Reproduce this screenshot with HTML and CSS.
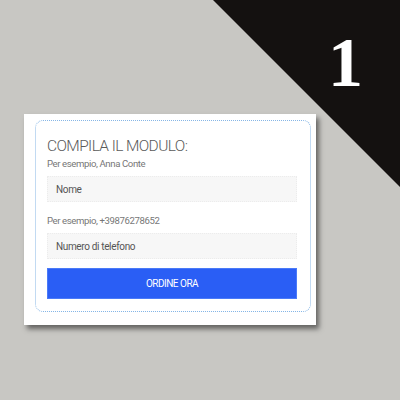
FILE: index.html
```
<!DOCTYPE html>
<html lang="it">
<head>
<meta charset="utf-8">
<link rel="stylesheet" href="styles.css">
</head>
<body>
<div class="corner"><span class="num">1</span></div>
<div class="card">
  <form class="form">
    <h1 class="title">COMPILA IL MODULO:</h1>
    <label class="hint">Per esempio, Anna Conte</label>
    <div class="input">Nome</div>
    <label class="hint">Per esempio, +39876278652</label>
    <div class="input">Numero di telefono</div>
    <div class="btn">ORDINE ORA</div>
  </form>
</div>
</body>
</html>
```
FILE: styles.css
```
html, body { margin: 0; padding: 0; }
body {
  width: 400px;
  height: 400px;
  background: #c8c7c3;
  font-family: Roboto, "Liberation Sans", sans-serif;
  position: relative;
  overflow: hidden;
  padding: 114px 0 0 24px;
  box-sizing: border-box;
}
.corner {
  position: absolute;
  top: 0;
  right: 0;
  width: 187px;
  height: 187px;
  background: #141110;
  clip-path: polygon(0 0, 100% 0, 100% 100%);
}
.num {
  position: absolute;
  left: 115px;
  top: 28px;
  color: #fff;
  font-family: "Liberation Serif", serif;
  font-weight: bold;
  font-size: 70px;
  line-height: 1;
}
.card {
  width: 292px;
  height: 211px;
  box-sizing: border-box;
  background: #fff;
  padding: 6px 5px 13px 11px;
  box-shadow: 3px 4px 5px rgba(0,0,0,0.5);
}
.form {
  height: 100%;
  box-sizing: border-box;
  border: 1px dotted #86b6e6;
  border-radius: 8px;
  padding: 16px 13px 0 11px;
  display: flex;
  flex-direction: column;
}
.title {
  margin: 0;
  font-size: 15.5px;
  line-height: 18px;
  font-weight: 300;
  letter-spacing: -0.6px;
  color: #5a5a5a;
}
.hint {
  font-size: 9.6px;
  line-height: 12px;
  letter-spacing: -0.4px;
  color: #777;
  margin-top: 3px;
}
.input {
  height: 26px;
  box-sizing: border-box;
  margin-top: 6px;
  background: #f7f7f7;
  border: 1px dotted #ececec;
  font-size: 10px;
  letter-spacing: -0.35px;
  color: #555;
  padding-left: 8px;
  display: flex;
  align-items: center;
}
.input + .hint { margin-top: 13px; }
.btn {
  margin-top: 9px;
  height: 31px;
  background: #2a5ef5;
  border: 1px solid #4a7af8;
  box-sizing: border-box;
  color: #fff;
  font-size: 10px;
  letter-spacing: -0.5px;
  display: flex;
  align-items: center;
  justify-content: center;
}
```
